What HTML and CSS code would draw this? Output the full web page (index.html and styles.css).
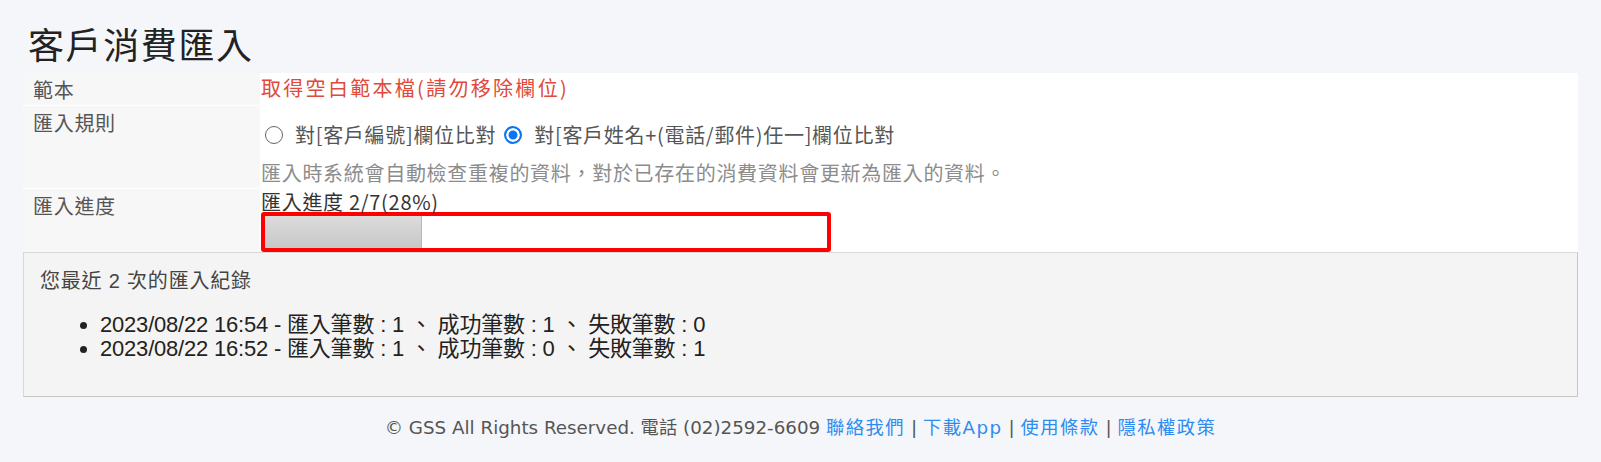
FILE: index.html
```html
<!DOCTYPE html>
<html>
<head>
  <title>客戶消費匯入</title>
  <link rel="stylesheet" href="styles.css">
</head>
<body>
  <div class="page">
    <h1 class="page-title">客戶消費匯入</h1>

    <div class="form-card">
      <div class="form-label">範本</div>
      <div class="form-field field-template">
        <a class="template-link" href="#">取得空白範本檔(請勿移除欄位)</a>
      </div>

      <div class="form-label">匯入規則</div>
      <div class="form-field field-rule">
        <div class="radio-group">
          <label class="radio-option"><input type="radio" name="rule" value="code">對[客戶編號]欄位比對</label>
          <label class="radio-option"><input type="radio" name="rule" value="name" checked>對[客戶姓名+(電話/郵件)任一]欄位比對</label>
        </div>
        <div class="hint">匯入時系統會自動檢查重複的資料，對於已存在的消費資料會更新為匯入的資料。</div>
      </div>

      <div class="form-label">匯入進度</div>
      <div class="form-field field-progress">
        <div class="progress-text">匯入進度 2/7(28%)</div>
        <div class="progress">
          <div class="progress-value" style="width: 28%"></div>
        </div>
      </div>
    </div>

    <div class="history-box">
      <p class="history-title">您最近 2 次的匯入紀錄</p>
      <ul class="history-list">
        <li>2023/08/22 16:54 - 匯入筆數 : 1 、 成功筆數 : 1 、 失敗筆數 : 0</li>
        <li>2023/08/22 16:52 - 匯入筆數 : 1 、 成功筆數 : 0 、 失敗筆數 : 1</li>
      </ul>
    </div>
  </div>

  <footer class="site-footer">
    © GSS All Rights Reserved. 電話 (02)2592-6609
    <a href="#">聯絡我們</a> | <a href="#">下載App</a> | <a href="#">使用條款</a> | <a href="#">隱私權政策</a>
  </footer>
</body>
</html>
```

FILE: styles.css
```css
body {
  margin: 0;
  background-color: #f5f6fa;
  font-family: "Noto Sans CJK TC", sans-serif;
  color: #333;
}
.page {
  padding: 23px 23px 0;
}
.page-title {
  margin: 0 0 10px 5px;
  font-size: 36px;
  font-weight: 400;
  line-height: 40px;
  letter-spacing: 1.6px;
  color: #222;
}

/* form table */
.form-card {
  display: grid;
  grid-template-columns: 237px 1fr;
  row-gap: 1px;
  background-color: #fff;
  border-radius: 4px 4px 0 0;
  font-size: 20px;
  letter-spacing: 0.7px;
}
.form-label {
  background-color: #f7f7f7;
  padding: 3px 10px 0;
  line-height: 28px;
  color: #555;
}
.form-field {
  background-color: #fff;
  padding-left: 1px;
}
.field-template {
  line-height: 30px;
  padding-bottom: 2px;
}
.template-link {
  color: #e0493b;
  text-decoration: none;
  letter-spacing: 2.3px;
}
.field-rule {
  padding-top: 14px;
}
.radio-group {
  display: flex;
  align-items: center;
  line-height: 30px;
  color: #555;
}
.radio-option {
  display: flex;
  align-items: center;
}
.radio-option + .radio-option {
  margin-left: 4px;
}
.radio-option input {
  appearance: none;
  width: 18px;
  height: 18px;
  margin: 0 12px 0 4px;
  border: 1.5px solid #666;
  border-radius: 50%;
  background-color: #fff;
}
.radio-option input:checked {
  border: 2px solid #0b75f5;
  background-color: #0b75f5;
  box-shadow: inset 0 0 0 2.5px #fff;
}
.hint {
  margin-top: 8px;
  line-height: 30px;
  color: #8c8c8c;
}
.field-progress {
  padding-top: 3px;
}
.progress-text {
  line-height: 20px;
  color: #333;
}
.progress {
  width: 562px;
  height: 32px;
  border: 4px solid #f00;
  border-radius: 3px;
  background-color: #fff;
}
.progress-value {
  height: 100%;
  background: linear-gradient(#dcdcdc, #c7c7c7);
  border-right: 1px solid #b8b8b8;
  box-sizing: border-box;
}

/* history */
.history-box {
  background-color: #f4f4f4;
  border: 1px solid #d9d9d9;
  border-right-color: #c6c6c6;
  border-bottom-color: #c6c6c6;
  padding: 16px 16px 35px;
  font-family: "Liberation Sans", "Noto Sans CJK TC", sans-serif;
  color: #333;
}
.history-title {
  margin: 0;
  font-size: 20px;
  line-height: 24px;
  letter-spacing: 0.8px;
  color: #444;
}
.history-list {
  margin: 20px 0 0;
  padding-left: 60px;
  font-size: 22px;
  line-height: 24px;
  letter-spacing: -0.2px;
  color: #222;
}

/* footer */
.site-footer {
  margin-top: 19px;
  text-align: center;
  font-family: "DejaVu Sans", "Noto Sans CJK TC", sans-serif;
  font-size: 18.3px;
  line-height: 24px;
  color: #555;
}
.site-footer a {
  color: #2d8cf0;
  text-decoration: none;
  letter-spacing: 1.5px;
}
```
